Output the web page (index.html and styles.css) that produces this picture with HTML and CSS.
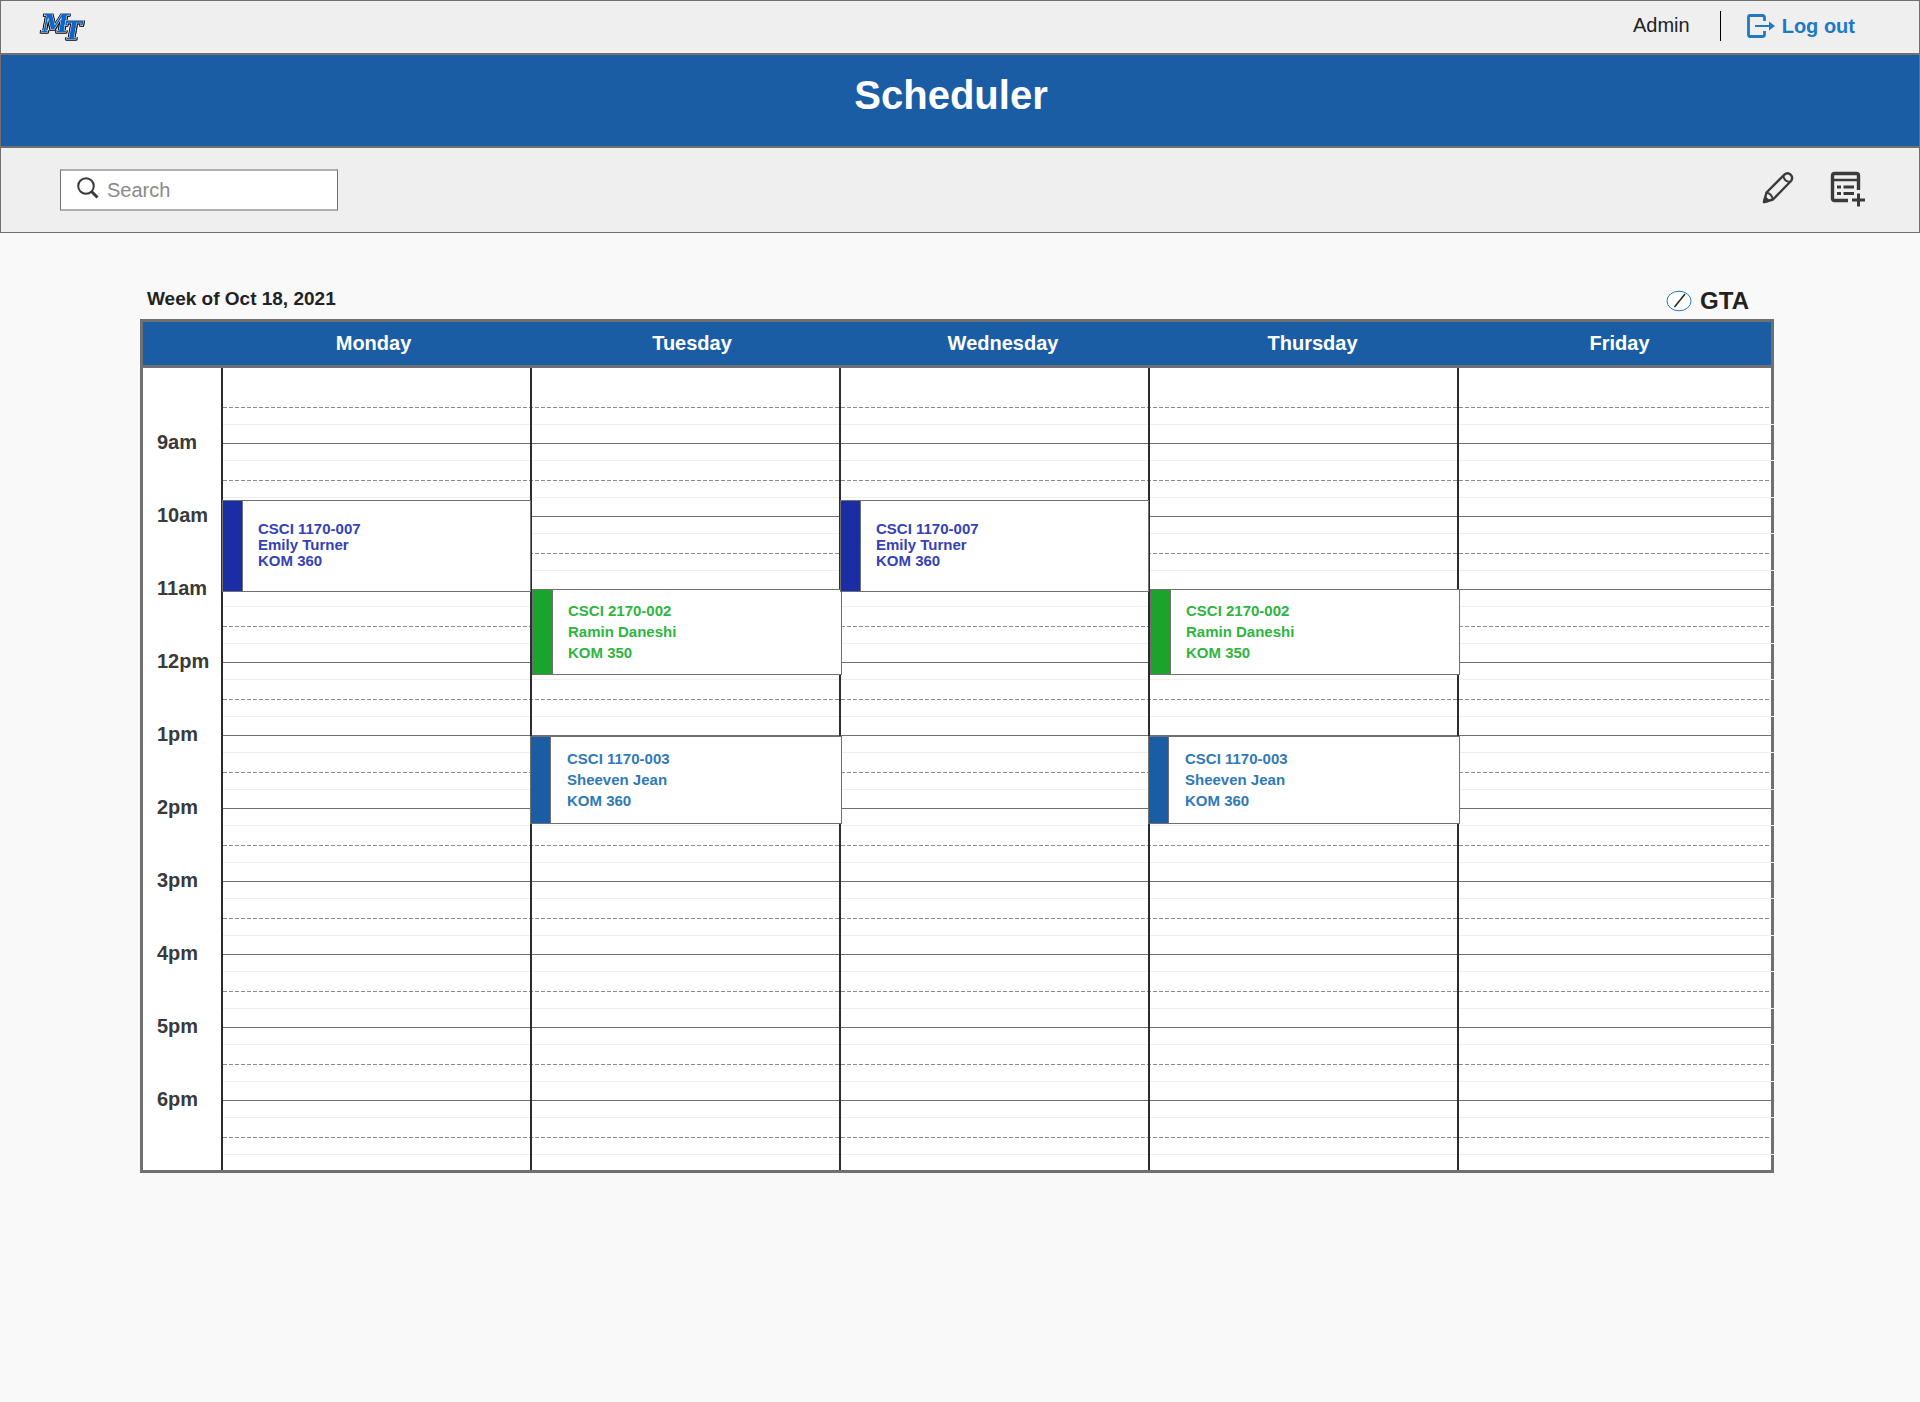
FILE: index.html
```html
<!DOCTYPE html>
<html lang="en">
<head>
<meta charset="utf-8">
<meta name="viewport" content="width=device-width, initial-scale=1">
<title>Scheduler</title>
<link rel="stylesheet" href="styles.css">
</head>
<body>
<header>
  <div class="topbar">
    <svg class="logo" width="60" height="40" viewBox="0 0 60 40" role="img" aria-label="MT">
      <text x="5" y="26" font-size="24">M<tspan x="27" y="33">T</tspan></text>
    </svg>
    <div class="account">
      <span class="user">Admin</span>
      <a class="logout" href="#">
        <svg width="30" height="26" viewBox="0 0 30 26" fill="none" stroke="currentColor" aria-hidden="true">
          <path d="M18.500 8V4.500q0-2-2-2H4q-1.500 0-1.500 2v17q0 2 1.500 2h12.500q2 0 2-2V18" stroke-width="2.800"/>
          <path d="M9 13h15" stroke-width="2"/>
          <path d="M23 8.500l6 4.500-6 4.500z" fill="currentColor" stroke="none"/>
        </svg>
        Log out
      </a>
    </div>
  </div>
  <div class="banner"><h1>Scheduler</h1></div>
  <div class="toolbar">
    <label class="search">
      <svg width="22" height="22" viewBox="0 0 22 22" fill="none" stroke="#3a3a3a" aria-hidden="true">
        <circle cx="9" cy="9" r="7.800" stroke-width="2"/>
        <path d="M14.500 14.500l6 6" stroke-width="3"/>
      </svg>
      <input type="search" placeholder="Search" aria-label="Search">
    </label>
    <div class="actions">
      <button type="button" aria-label="Edit schedule">
        <svg width="32" height="36" viewBox="0 0 32 36" fill="none" stroke="#3a3a3a" stroke-width="2.400" stroke-linejoin="round" aria-hidden="true">
          <path d="M2 31L4.500 21.500 22.500 3.500Q25.500 1 28.500 3.500 31.500 6.500 29 10L11 28.500Z"/>
          <path d="M21.500 5q.5 5.500 6.500 6M4.500 21.500q5 1 6.500 7" stroke-width="2"/>
          <path d="M2 31l1.200-4.500 3.300 3.300z" fill="#3a3a3a"/>
        </svg>
      </button>
      <button type="button" aria-label="Add schedule">
        <svg width="36" height="36" viewBox="0 0 36 36" fill="none" stroke="#3a3a3a" aria-hidden="true">
          <path d="M18 29.500H4.500q-2 0-2-2v-23q0-2 2-2h22q2 0 2 2V19" stroke-width="3.400"/>
          <path d="M2.500 9h26" stroke-width="2.500"/>
          <path d="M7 16h4M13.500 16h10.500M7 22.500h4M13.500 22.500h10.500" stroke-width="3"/>
          <path d="M28.500 22.500v13M22 29h13" stroke-width="3"/>
        </svg>
      </button>
    </div>
  </div>
</header>

<main>
  <div class="caption">
    <h2>Week of Oct 18, 2021</h2>
    <p class="role">
      <svg width="26" height="22" viewBox="0 0 26 22" aria-hidden="true">
        <ellipse cx="13" cy="11" rx="12" ry="9.800" fill="#fff" stroke="#2478cc"/>
        <path d="M8.500 17L19 4" stroke="#222" stroke-width="1.500"/>
      </svg>
      GTA
    </p>
  </div>

  <section class="calendar" aria-label="Weekly schedule">
    <div class="days-head">
      <h3>Monday</h3><h3>Tuesday</h3><h3>Wednesday</h3><h3>Thursday</h3><h3>Friday</h3>
    </div>
    <div class="days-body">
      <ol class="times">
        <li>9am</li><li>10am</li><li>11am</li><li>12pm</li><li>1pm</li>
        <li>2pm</li><li>3pm</li><li>4pm</li><li>5pm</li><li>6pm</li>
      </ol>
      <div class="lines" aria-hidden="true">
        <div class="hour"><i></i><i></i><i></i><i></i></div>
        <div class="hour"><i></i><i></i><i></i><i></i></div>
        <div class="hour"><i></i><i></i><i></i><i></i></div>
        <div class="hour"><i></i><i></i><i></i><i></i></div>
        <div class="hour"><i></i><i></i><i></i><i></i></div>
        <div class="hour"><i></i><i></i><i></i><i></i></div>
        <div class="hour"><i></i><i></i><i></i><i></i></div>
        <div class="hour"><i></i><i></i><i></i><i></i></div>
        <div class="hour"><i></i><i></i><i></i><i></i></div>
        <div class="hour"><i></i><i></i><i></i><i></i></div>
        <div class="hour"><i></i><i></i><i></i><i></i></div>
      </div>
      <div class="days">
        <div class="day">
          <article class="event navy"><p>CSCI 1170-007</p><p>Emily Turner</p><p>KOM 360</p></article>
        </div>
        <div class="day">
          <article class="event green"><p>CSCI 2170-002</p><p>Ramin Daneshi</p><p>KOM 350</p></article>
          <article class="event blue"><p>CSCI 1170-003</p><p>Sheeven Jean</p><p>KOM 360</p></article>
        </div>
        <div class="day">
          <article class="event navy"><p>CSCI 1170-007</p><p>Emily Turner</p><p>KOM 360</p></article>
        </div>
        <div class="day">
          <article class="event green"><p>CSCI 2170-002</p><p>Ramin Daneshi</p><p>KOM 350</p></article>
          <article class="event blue"><p>CSCI 1170-003</p><p>Sheeven Jean</p><p>KOM 360</p></article>
        </div>
        <div class="day"></div>
      </div>
    </div>
  </section>
</main>
</body>
</html>
```
FILE: styles.css
```css
* { box-sizing: border-box; }

body {
  margin: 0;
  background: #f9f9f9;
  color: #222;
  font: 20px/24px "Liberation Sans", Arial, Helvetica, sans-serif;
}

h1, h2, h3, p, ol { margin: 0; padding: 0; }
svg { display: block; flex: none; }

/* Header bars */
.topbar, .banner, .toolbar {
  display: flex;
  align-items: center;
  justify-content: space-between;
  border: 1px solid #707070;
  background: #efefef;
}

.topbar { height: 54px; padding: 0 64px 3px 36px; }
.logo { font-family: "DejaVu Serif", serif; font-weight: bold; font-style: italic; }
.logo text {
  fill: #0a66cc;
  stroke: #f4f4f4;
  stroke-width: 1px;
  paint-order: stroke;
  filter: drop-shadow(1px 0 #111) drop-shadow(-1px 0 #111) drop-shadow(0 1px #333);
}

.account { display: flex; align-items: center; }
.user { padding: 0 30px 2px 0; }
.logout {
  display: flex;
  align-items: center;
  gap: 6px;
  height: 30px;
  padding-left: 25px;
  border-left: 1px solid #000;
  color: #2079c3;
  font-weight: bold;
  text-decoration: none;
}

.banner { height: 93px; justify-content: center; padding: 0 18px 12px 0; background: #1a5da4; }
.banner h1 { color: #fff; font-size: 40px; line-height: 48px; }

.toolbar { height: 86px; padding: 0 53px 0 59px; }
.search {
  display: flex;
  align-items: center;
  gap: 8px;
  width: 278px;
  height: 42px;
  padding: 0 16px;
  border: solid;
  border-width: 2px 1px;
  border-color: #b0b0b0 #707070;
  background: #fff;
}
.search svg { margin-bottom: 4px; }
.search input {
  flex: 1;
  min-width: 0;
  padding: 0;
  border: 0;
  outline: 0;
  background: none;
  color: #222;
  font: inherit;
}
.search input::placeholder { color: #8a8a8a; opacity: 1; }

.actions { display: flex; gap: 36px; padding-bottom: 2px; }
.actions button { padding: 0; border: 0; background: none; cursor: pointer; }

/* Week caption */
main { padding: 0 146px 48px 140px; }
.caption {
  display: flex;
  align-items: flex-end;
  justify-content: space-between;
  height: 86px;
  padding: 0 25px 6px 7px;
}
.caption h2 { padding-bottom: 2px; font-size: 19px; line-height: 24px; }
.role { display: flex; align-items: center; gap: 8px; font-size: 24px; font-weight: bold; line-height: 24px; }

/* Calendar */
.calendar { border: 3px solid #707070; background: #fff; }
.days-head {
  display: grid;
  grid-template-columns: 315fr 322fr 300fr 319fr 295fr;
  align-items: center;
  height: 46px;
  padding: 0 4px 1px 73px;
  border-bottom: 3px solid #707070;
  background: #1a5da4;
}
.days-head h3 { color: #fff; font-size: 20px; line-height: 24px; text-align: center; }

.days-body { display: grid; grid-template-columns: 78px 1fr; }
.times {
  grid-area: 1 / 1;
  padding: 62px 0 0 14px;
  list-style: none;
  color: #3a3a3a;
  font-weight: bold;
}
.times li { height: 73px; }
.times li:last-child { height: 24px; }

.lines { grid-area: 1 / 2; }
.hour { display: grid; grid-template-rows: 17px 20px 17px 19px; }
.hour:first-child { grid-template-rows: 20px 20px 17px 19px; }
.hour:last-child { grid-template-rows: 17px 20px 17px 15px; }
.hour i { border-bottom: 1px solid #efefef; }
.hour i:nth-child(odd) { margin-right: -3px; }
.hour i:nth-child(4) { border-color: #707070; }
.hour i:nth-child(2) {
  border: 0;
  background: repeating-linear-gradient(90deg, transparent 0 2px, #8c8c8c 2px 6px) bottom / 100% 1px no-repeat;
}
.hour:first-child i:first-child, .hour:last-child i:last-child { border: 0; }

.days {
  grid-area: 1 / 2;
  display: grid;
  grid-template-columns: 309fr 309fr 309fr 309fr 314fr;
}
.day { position: relative; border-left: 2px solid #2c2c2c; }

.event {
  position: absolute;
  z-index: 1;
  display: flex;
  flex-direction: column;
  justify-content: center;
  padding: 0 0 2px 35px;
  border: 1px solid #707070;
  background: #fff;
  font-size: 15px;
  font-weight: bold;
  line-height: 21px;
}
.event::before {
  content: "";
  position: absolute;
  inset: 0 auto 0 0;
  width: 19px;
  border-right: 1px solid #707070;
}
.navy { top: 132px; left: -1px; right: -1px; height: 92px; color: #3441b8; line-height: 16px; }
.navy::before { background: #1a2da4; }
.green { top: 221px; left: 0; right: -3px; height: 86px; color: #2fb540; }
.green::before { background: #1aa42d; }
.blue { top: 368px; left: -2px; right: -3px; height: 88px; padding-left: 36px; color: #3079b8; }
.blue::before { background: #1a5da4; }
```
